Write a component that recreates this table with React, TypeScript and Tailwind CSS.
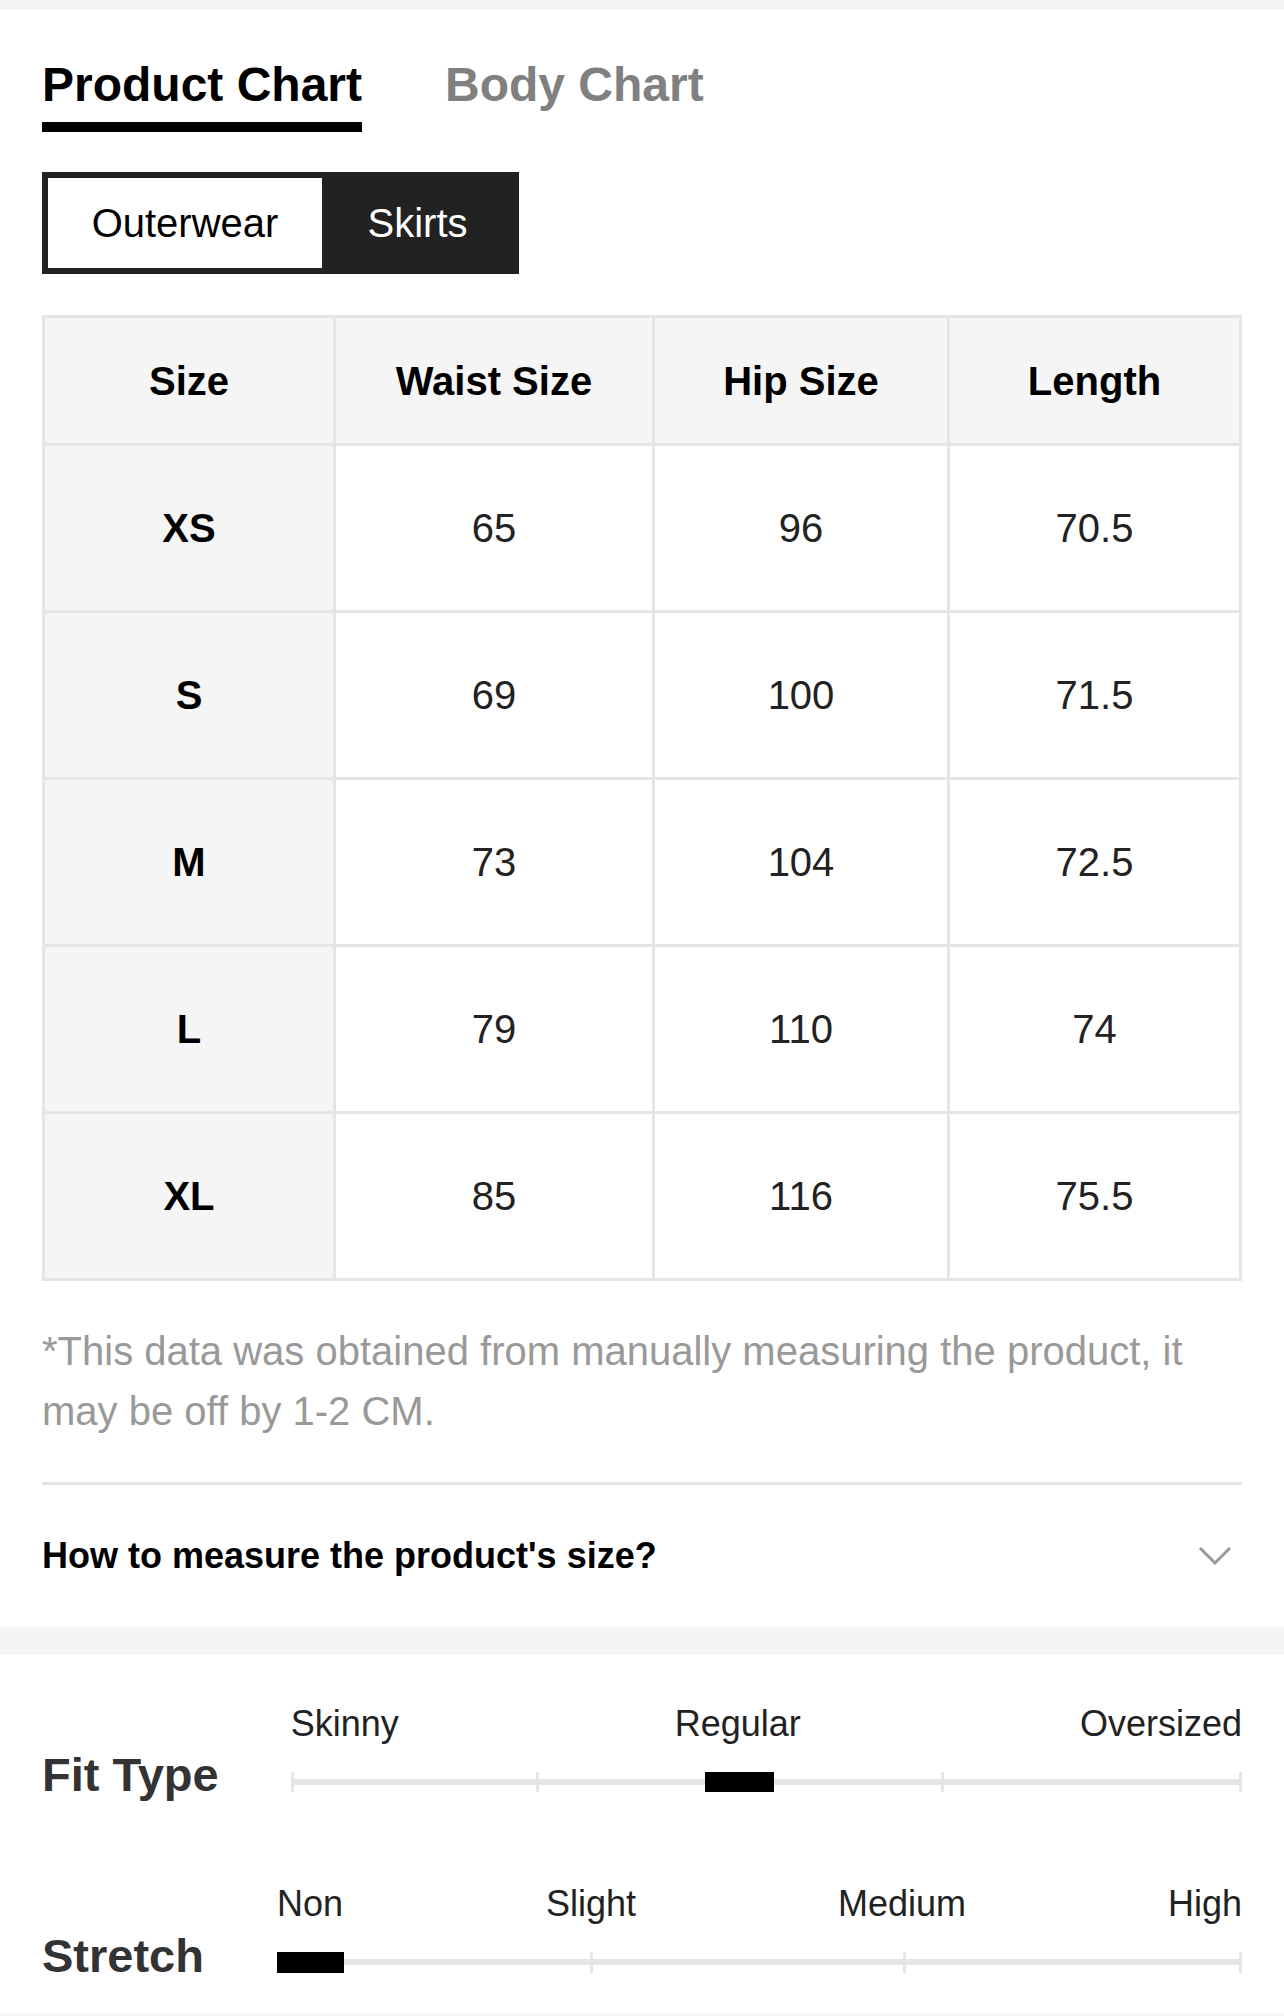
import React from 'react'

const rows = [
  { size: 'XS', waist: '65', hip: '96', length: '70.5' },
  { size: 'S', waist: '69', hip: '100', length: '71.5' },
  { size: 'M', waist: '73', hip: '104', length: '72.5' },
  { size: 'L', waist: '79', hip: '110', length: '74' },
  { size: 'XL', waist: '85', hip: '116', length: '75.5' },
]

const headers = ['Size', 'Waist Size', 'Hip Size', 'Length']

export default function App() {
  return (
    <div className="w-[1284px] min-h-[2016px] bg-white font-['Liberation_Sans',Arial,sans-serif]">
      <div className="h-[10px] bg-[#f5f5f5]" />

      <div className="px-[42px]">
        {/* tabs */}
        <div className="flex items-start gap-[83px] pt-[51px]">
          <div className="flex flex-col">
            <span className="text-[48px] leading-[48px] font-bold text-black">Product Chart</span>
            <div className="mt-[13px] h-[10px] bg-black" />
          </div>
          <span className="text-[48px] leading-[48px] font-bold text-[#808080]">Body Chart</span>
        </div>

        {/* category switch */}
        <div className="mt-[40px] inline-flex h-[102px] border-[6px] border-[#222] bg-[#222]">
          <div className="w-[274px] bg-white flex items-center justify-center text-[40px] text-black">
            Outerwear
          </div>
          <div className="w-[191px] flex items-center justify-center text-[40px] text-white">
            Skirts
          </div>
        </div>

        {/* size table */}
        <div className="mt-[41px] grid grid-cols-[288px_316px_292px_289px] gap-[3px] p-[3px] bg-[#e5e5e5]">
          {headers.map((h) => (
            <div key={h} className="h-[125px] bg-[#f5f5f5] flex items-center justify-center text-[40px] font-bold text-black">
              {h}
            </div>
          ))}
          {rows.map((r) => (
            <React.Fragment key={r.size}>
              <div className="h-[164px] bg-[#f5f5f5] flex items-center justify-center text-[40px] font-bold text-black">
                {r.size}
              </div>
              <div className="h-[164px] bg-white flex items-center justify-center text-[40px] text-[#222]">{r.waist}</div>
              <div className="h-[164px] bg-white flex items-center justify-center text-[40px] text-[#222]">{r.hip}</div>
              <div className="h-[164px] bg-white flex items-center justify-center text-[40px] text-[#222]">{r.length}</div>
            </React.Fragment>
          ))}
        </div>

        <p className="mt-[40px] text-[40px] leading-[60px] text-[#999]">
          *This data was obtained from manually measuring the product, it may be off by 1-2 CM.
        </p>

        <div className="mt-[41px] h-[3px] bg-[#e5e5e5]" />

        <div className="flex items-center justify-between pt-[53px] pb-[53px]">
          <span className="text-[36px] leading-[36px] font-bold text-black">How to measure the product's size?</span>
          <svg width="34" height="20" viewBox="0 0 34 20" className="mr-[10px]">
            <path d="M2 2 L17 17 L32 2" fill="none" stroke="#999" strokeWidth="3" />
          </svg>
        </div>
      </div>

      <div className="h-[28px] bg-[#f5f5f5]" />

      {/* fit & stretch */}
      <div className="px-[42px] pt-[47px] pb-[34px]">
        <div className="flex items-end gap-[72px]">
          <span className="text-[47px] leading-[46px] font-bold text-[#333]">Fit Type</span>
          <div className="flex-1 flex flex-col pb-[6px]">
            <div className="relative h-[44px] text-[36px] leading-[44px] text-[#222]">
              <span className="absolute left-0 top-0">Skinny</span>
              <span className="absolute left-[447px] top-0 -translate-x-1/2">Regular</span>
              <span className="absolute right-0 top-0">Oversized</span>
            </div>
            <div className="relative mt-[26px] h-[20px]">
              <div className="absolute left-0 right-0 top-[7px] h-[6px] bg-[#e5e5e5]" />
              <div className="absolute left-0 top-0 w-[3px] h-[20px] bg-[#e5e5e5]" />
              <div className="absolute left-[245px] top-0 w-[3px] h-[20px] bg-[#e5e5e5]" />
              <div className="absolute left-[650px] top-0 w-[3px] h-[20px] bg-[#e5e5e5]" />
              <div className="absolute right-0 top-0 w-[3px] h-[20px] bg-[#e5e5e5]" />
              <div className="absolute left-[414px] top-0 w-[69px] h-[20px] bg-black" />
            </div>
          </div>
        </div>

        <div className="mt-[84px] flex items-end gap-[73px]">
          <span className="text-[47px] leading-[46px] font-bold text-[#333]">Stretch</span>
          <div className="flex-1 flex flex-col pb-[6px]">
            <div className="relative h-[44px] text-[36px] leading-[44px] text-[#222]">
              <span className="absolute left-0 top-0">Non</span>
              <span className="absolute left-[314px] top-0 -translate-x-1/2">Slight</span>
              <span className="absolute left-[625px] top-0 -translate-x-1/2">Medium</span>
              <span className="absolute right-0 top-0">High</span>
            </div>
            <div className="relative mt-[26px] h-[21px]">
              <div className="absolute left-0 right-0 top-[7px] h-[6px] bg-[#e5e5e5]" />
              <div className="absolute left-[313px] top-0 w-[3px] h-[21px] bg-[#e5e5e5]" />
              <div className="absolute left-[626px] top-0 w-[3px] h-[21px] bg-[#e5e5e5]" />
              <div className="absolute right-0 top-0 w-[3px] h-[21px] bg-[#e5e5e5]" />
              <div className="absolute left-0 top-0 w-[67px] h-[21px] bg-black" />
            </div>
          </div>
        </div>
      </div>
      <div className="h-[3px] bg-[#f5f5f5]" />
    </div>
  )
}
